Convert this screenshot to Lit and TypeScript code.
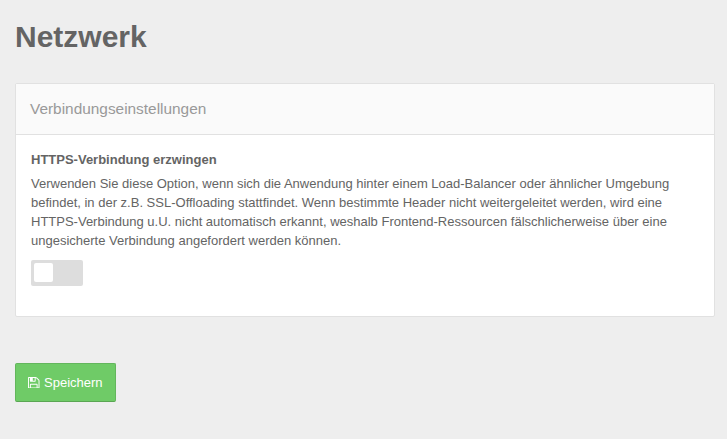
import { LitElement, html, css } from "lit";
import { customElement, state } from "lit/decorators.js";

@customElement("app-root")
export class AppRoot extends LitElement {
  @state() private forced = false;

  static styles = css`
    :host {
      display: block;
      box-sizing: border-box;
      height: 439px;
      padding: 16px 12px 0 15px;
      background: #eee;
      color: #646464;
      font: 13px/19px "Liberation Sans", Arial, sans-serif;
    }
    * { box-sizing: border-box; }
    h1 { margin: 0; font-size: 30px; line-height: 42px; font-weight: 700; }
    .panel {
      margin-top: 25px;
      height: 234px;
      background: #fff;
      border: 1px solid #e1e1e1;
      border-radius: 2px;
    }
    .head {
      height: 51px;
      padding: 0 14px;
      background: #fafafa;
      border-bottom: 1px solid #e1e1e1;
      color: #999;
      font-size: 15.4px;
      line-height: 50px;
    }
    .body { padding: 15px; }
    .label { font-weight: 700; }
    .text { margin: 5px 0 10px; white-space: nowrap; }
    .switch {
      display: flex;
      width: 52px;
      height: 26px;
      padding: 3px;
      border: 0;
      border-radius: 2px;
      background: #ddd;
    }
    .switch.on { justify-content: flex-end; background: #6fcb67; }
    .knob { width: 19px; height: 19px; background: #fff; border-radius: 2px; }
    .save {
      display: flex;
      align-items: center;
      width: 101px;
      height: 39px;
      margin-top: 46px;
      padding: 0 0 0 12px;
      gap: 4.5px;
      background: #6fcb67;
      border: 1px solid #63b65c;
      border-bottom-color: #5aa653;
      border-radius: 2px;
      color: #fff;
      font: inherit;
    }
    .save svg { width: 11.5px; height: 11.5px; flex: none; }
  `;

  render() {
    return html`
      <h1>Netzwerk</h1>
      <section class="panel">
        <div class="head">Verbindungseinstellungen</div>
        <div class="body">
          <div class="label">HTTPS-Verbindung erzwingen</div>
          <div class="text">
            Verwenden Sie diese Option, wenn sich die Anwendung hinter einem Load-Balancer oder ähnlicher Umgebung<br />befindet,
            in der z.B. SSL-Offloading stattfindet. Wenn bestimmte Header nicht weitergeleitet werden, wird eine<br />HTTPS-Verbindung
            u.U. nicht automatisch erkannt, weshalb Frontend-Ressourcen fälschlicherweise über eine<br />ungesicherte
            Verbindung angefordert werden können.
          </div>
          <button
            class="switch ${this.forced ? "on" : ""}"
            role="switch"
            aria-label="HTTPS-Verbindung erzwingen"
            aria-checked=${this.forced}
            @click=${() => (this.forced = !this.forced)}
          ><span class="knob"></span></button>
        </div>
      </section>
      <button class="save">
        <svg viewBox="0 0 1536 1536" fill="currentColor" aria-hidden="true">
          <path fill-rule="evenodd" d="M384 1408h768v-384H384zM1280 1408h128V512q0-14-10-38.500t-20-34.500l-281-281q-10-10-34-20t-39-10v416q0 40-28 68t-68 28H352q-40 0-68-28t-28-68V128H128v1280h128v-416q0-40 28-68t68-28h832q40 0 68 28t28 68zM896 480V160q0-13-9.500-22.500T864 128H672q-13 0-22.500 9.500T640 160v320q0 13 9.500 22.500T672 512h192q13 0 22.500-9.500T896 480zM1536 512v928q0 40-28 68t-68 28H96q-40 0-68-28t-28-68V96q0-40 28-68T96 0h928q40 0 88 20t76 48l280 280q28 28 48 76t20 88z"/>
        </svg>
        <span>Speichern</span>
      </button>
    `;
  }
}
